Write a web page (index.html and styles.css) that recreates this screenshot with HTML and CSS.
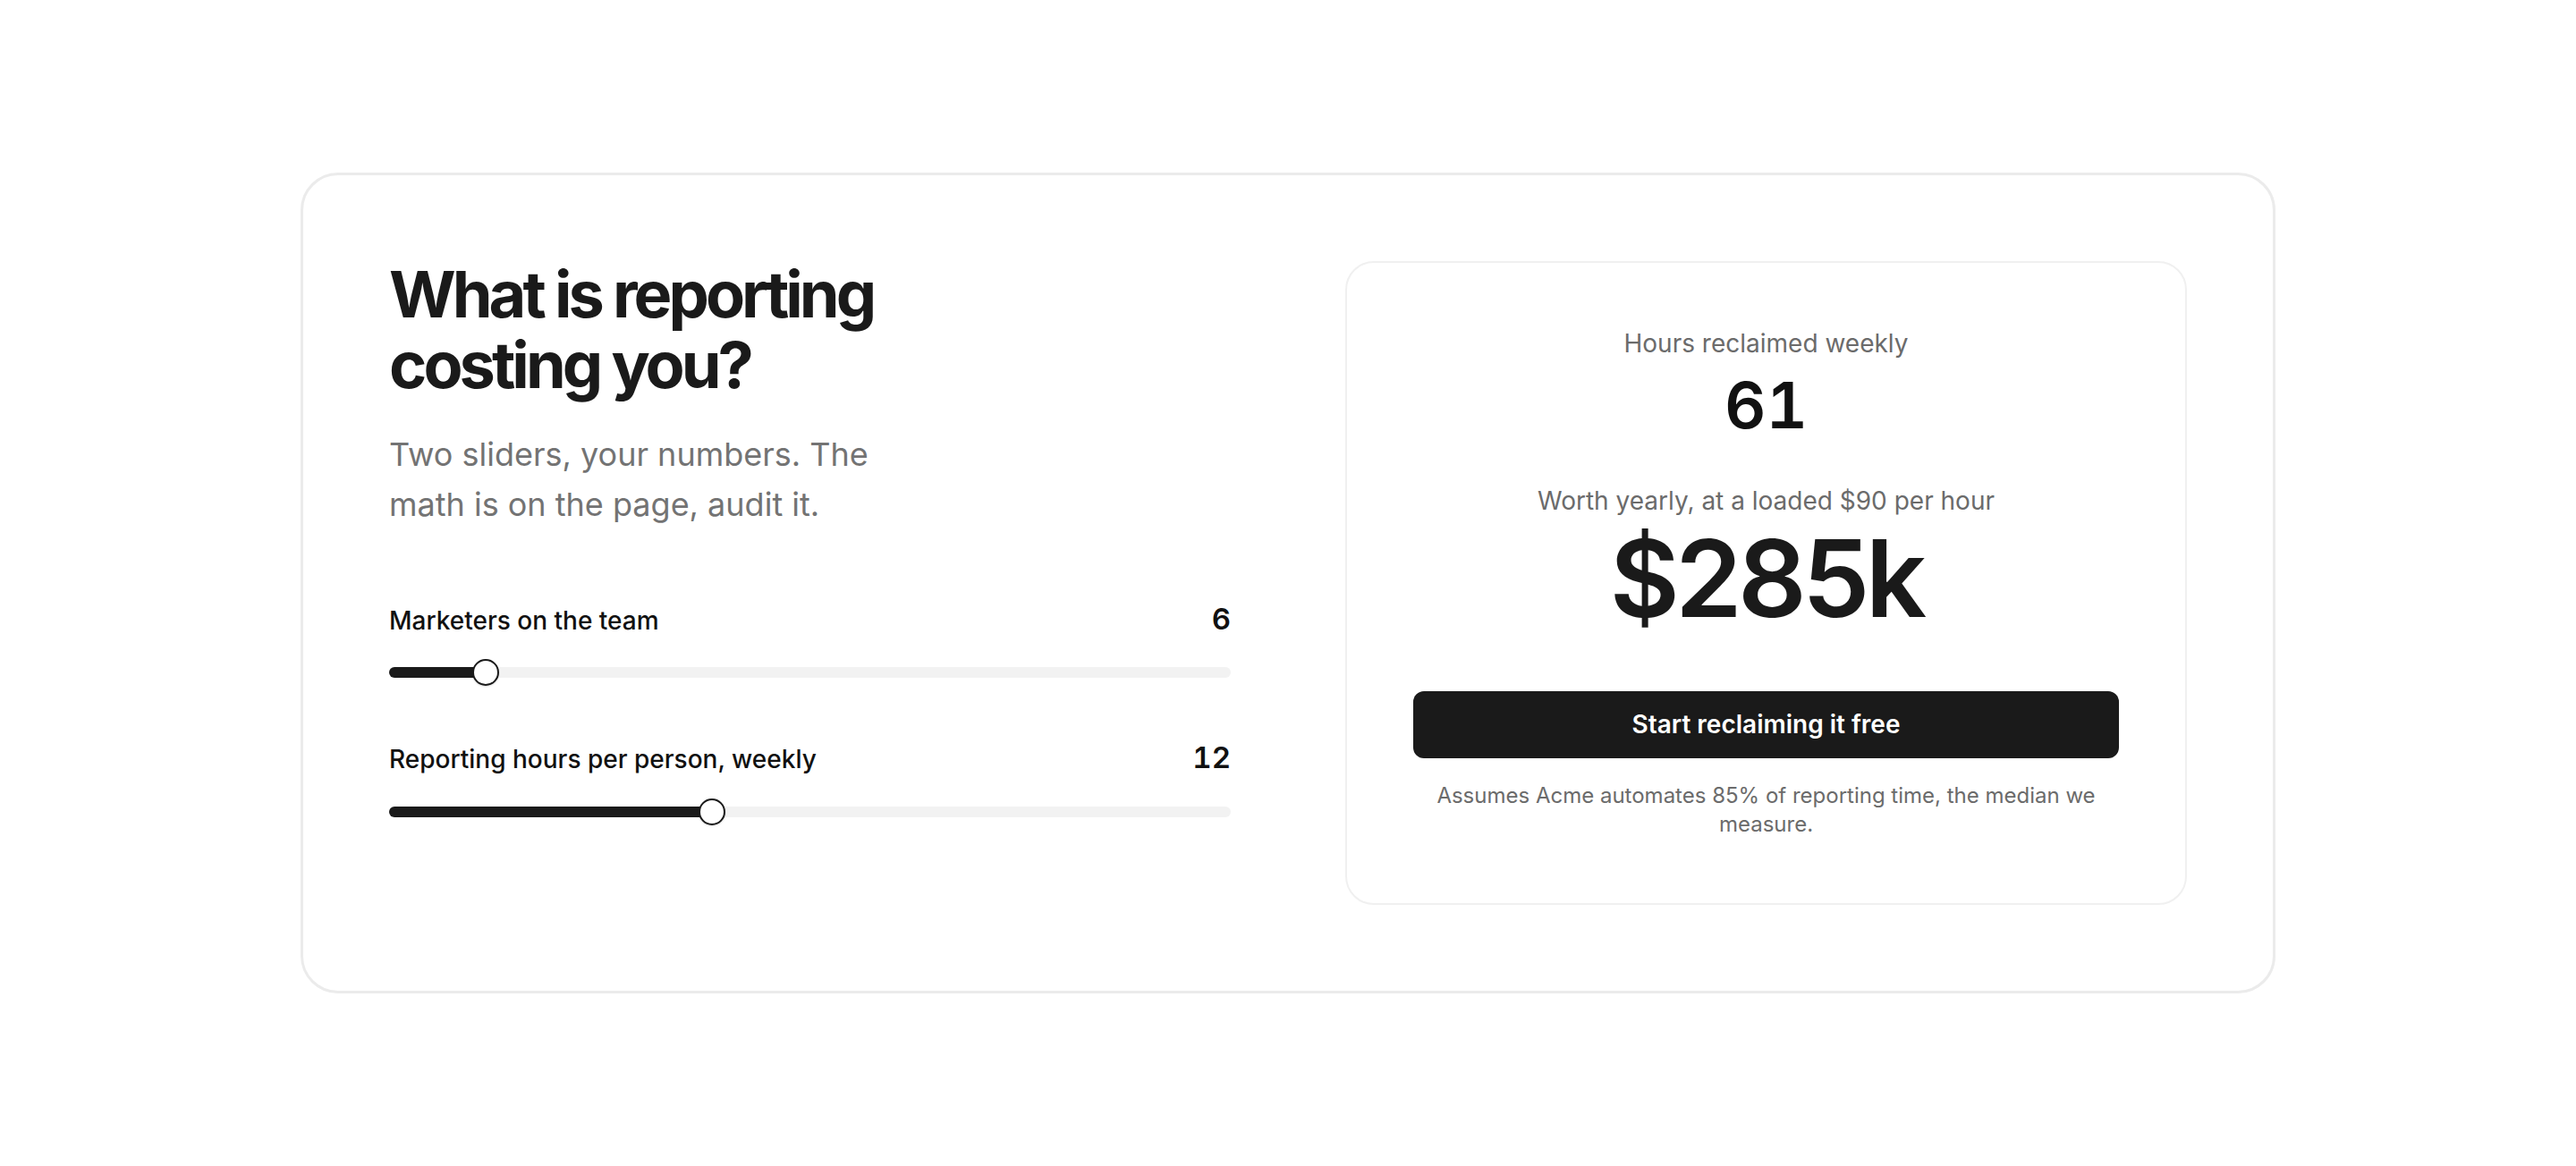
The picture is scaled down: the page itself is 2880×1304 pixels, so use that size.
FILE: index.html
```html
<!DOCTYPE html>
<html lang="en">
<head>
    <meta charset="UTF-8">
    <meta name="viewport" content="width=device-width, initial-scale=1.0">
    <title>Reporting cost calculator</title>
    <link rel="stylesheet" href="styles.css">
</head>
<body>
    <section class="calc">
        <!-- Left side: pitch and the two inputs -->
        <div class="intro">
            <h1>What is reporting costing you?</h1>
            <p class="lede">Two sliders, your numbers. The math is on the page, audit it.</p>

            <div class="fields">
                <div class="field">
                    <div class="field-row">
                        <label for="team">Marketers on the team</label>
                        <span class="field-value" id="teamOut">6</span>
                    </div>
                    <input type="range" id="team" class="slider" min="1" max="50" value="6">
                </div>
                <div class="field">
                    <div class="field-row">
                        <label for="hours">Reporting hours per person, weekly</label>
                        <span class="field-value" id="hoursOutLeft">12</span>
                    </div>
                    <input type="range" id="hours" class="slider" min="1" max="30" value="12">
                </div>
            </div>
        </div>

        <!-- Right side: the result card -->
        <div class="result">
            <p class="result-label">Hours reclaimed weekly</p>
            <p class="result-hours" id="reclaimed">61</p>
            <p class="result-label second">Worth yearly, at a loaded $90 per hour</p>
            <p class="result-money" id="worth">$285k</p>
            <a class="cta" href="#">Start reclaiming it free</a>
            <p class="note">Assumes Acme automates 85% of reporting time, the median we measure.</p>
        </div>
    </section>

    <script>
        const RATE = 90;
        const SHARE = 0.85;

        const team = document.getElementById('team');
        const hours = document.getElementById('hours');

        // paint the dark part of the track up to the thumb
        function paint(slider) {
            const min = Number(slider.min);
            const max = Number(slider.max);
            const p = (slider.value - min) / (max - min);
            slider.style.setProperty('--p', p);
        }

        function update() {
            const people = Number(team.value);
            const perPerson = Number(hours.value);

            document.getElementById('teamOut').textContent = people;
            document.getElementById('hoursOutLeft').textContent = perPerson;

            const weekly = Math.round(people * perPerson * SHARE);
            const yearly = weekly * RATE * 52;

            document.getElementById('reclaimed').textContent = weekly;
            document.getElementById('worth').textContent = '$' + Math.floor(yearly / 1000) + 'k';

            paint(team);
            paint(hours);
        }

        team.addEventListener('input', update);
        hours.addEventListener('input', update);
        update();
    </script>
</body>
</html>
```

FILE: styles.css
```css
* {
    margin: 0;
    padding: 0;
    box-sizing: border-box;
}
body {
    min-height: 100vh;
    display: flex;
    align-items: center;
    justify-content: center;
    background: #ffffff;
    font-family: Inter, "Noto Sans", sans-serif;
    color: #1a1a1a;
}

.calc {
    width: 2208px;
    display: grid;
    grid-template-columns: 1fr 1fr;
    gap: 128px;
    padding: 96px;
    border: 3px solid #ebebeb;
    border-radius: 42px;
    background: #fff;
}

/* left column */
.intro h1 {
    max-width: 600px;
    margin-top: -3px;
    font-size: 72px;
    line-height: 1.1;
    font-weight: 700;
    letter-spacing: -0.055em;
    color: #1a1a1a;
}
.lede {
    max-width: 600px;
    margin-top: 33px;
    font-size: 36px;
    line-height: 56px;
    color: #737373;
}
.fields {
    margin-top: 76px;
}
.field + .field {
    margin-top: 56px;
}
.field-row {
    display: flex;
    justify-content: space-between;
    align-items: baseline;
    line-height: 1.5;
}
.field-row label {
    font-size: 28px;
    font-weight: 500;
    color: #111;
}
.field-value {
    font-size: 33px;
    font-weight: 600;
    font-variant-numeric: tabular-nums;
    color: #111;
}

.slider {
    --p: 0;
    -webkit-appearance: none;
    appearance: none;
    display: block;
    width: 100%;
    height: 30px;
    margin-top: 20px;
    background: transparent;
    outline: none;
}
.slider::-webkit-slider-runnable-track {
    height: 12px;
    border-radius: 6px;
    background: linear-gradient(to right,
        #1a1a1a calc(15px + (100% - 30px) * var(--p)),
        #f2f2f2 calc(15px + (100% - 30px) * var(--p)));
}
.slider::-webkit-slider-thumb {
    -webkit-appearance: none;
    appearance: none;
    width: 30px;
    height: 30px;
    margin-top: -9px;
    border-radius: 50%;
    background: #fff;
    border: 2px solid #1a1a1a;
    box-shadow: 0 1px 2px rgba(0, 0, 0, 0.15);
}

/* right column */
.result {
    padding: 72px 74px;
    border: 2px solid #f0f0f0;
    border-radius: 32px;
    text-align: center;
}
.result-label {
    font-size: 28px;
    line-height: 1.3;
    color: #6b6b6b;
}
.result-label.second {
    margin-top: 50px;
}
.result-hours {
    margin-top: 11px;
    font-size: 72px;
    line-height: 1.1;
    font-weight: 600;
    font-variant-numeric: tabular-nums;
    color: #111;
}
.result-money {
    margin-top: 3px;
    font-size: 120px;
    line-height: 1.1;
    font-weight: 600;
    letter-spacing: -0.04em;
    color: #1a1a1a;
}
.cta {
    display: block;
    margin-top: 60px;
    padding: 17px 24px;
    border-radius: 12px;
    background: #1a1a1a;
    color: #fff;
    font-size: 28px;
    line-height: 41px;
    font-weight: 600;
    text-decoration: none;
}
.note {
    margin-top: 26px;
    font-size: 24px;
    line-height: 32px;
    color: #6b6b6b;
}
```
